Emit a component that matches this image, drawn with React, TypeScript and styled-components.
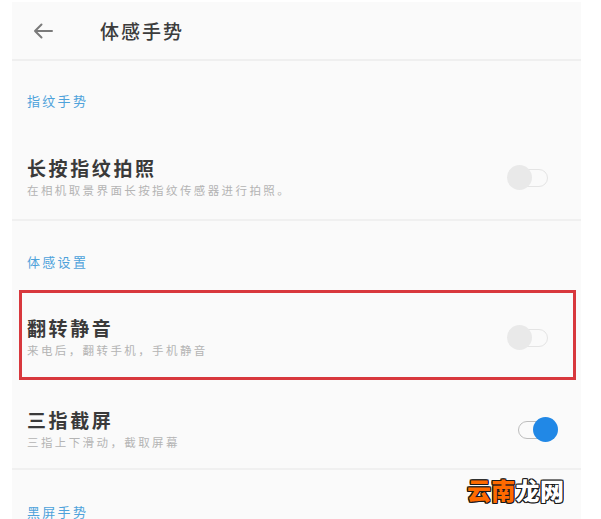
import React from "react";
import styled, { createGlobalStyle } from "styled-components";

const Global = createGlobalStyle`
  html, body { margin: 0; padding: 0; background: #ffffff; }
  body { font-family: "Noto Sans CJK SC", "Noto Sans", sans-serif; }
`;

const Page = styled.div`
  width: 601px;
  height: 519px;
  background: #ffffff;
  overflow: hidden;
`;

const Phone = styled.div`
  position: relative;
  margin: 2px 0 0 12px;
  width: 569px;
  height: 517px;
  background: #fafafa;
  overflow: hidden;
`;

const Header = styled.div`
  height: 57px;
  display: flex;
  align-items: center;
  padding-left: 21px;
  border-bottom: 2px solid #efefef;
  box-sizing: content-box;
`;

const BackBtn = styled.div`
  width: 20px;
  height: 16px;
  display: flex;
  margin-top: 1px;
`;

const Title = styled.div`
  margin-left: 47px;
  font-size: 19px;
  letter-spacing: 2px;
  color: #3c3c3c;
  font-weight: 500;
  line-height: 24px;
`;

const SectionLabel = styled.div<{ $top: number; $bottom: number }>`
  padding: ${(p) => p.$top}px 0 ${(p) => p.$bottom}px 15px;
  font-size: 13px;
  letter-spacing: 2.3px;
  line-height: 20px;
  color: #4ea2da;
`;

const Row = styled.div<{ $top: number; $bottom: number; $divider?: boolean }>`
  display: flex;
  align-items: center;
  padding: ${(p) => p.$top}px 23px ${(p) => p.$bottom}px 15px;
  border-bottom: ${(p) => (p.$divider ? "2px solid #f0f0f0" : "none")};
`;

const Highlight = styled.div`
  margin: 0 5px 0 7px;
  border: 3px solid #d8383d;
  display: flex;
  align-items: center;
  padding: 23px 15px 17px 5px;
`;

const TextCol = styled.div`
  flex: 1;
  display: flex;
  flex-direction: column;
`;

const ItemTitle = styled.div`
  font-size: 19px;
  font-weight: 700;
  letter-spacing: 2.6px;
  line-height: 24px;
  color: #3a3a3a;
`;

const ItemSub = styled.div`
  font-size: 11.5px;
  letter-spacing: 2.4px;
  line-height: 20px;
  color: #b4b4b4;
`;

const SwitchBox = styled.div`
  position: relative;
  width: 51px;
  height: 26px;
  flex: none;
`;

const Track = styled.div<{ $on: boolean }>`
  position: absolute;
  top: 4px;
  left: ${(p) => (p.$on ? 11 : 6)}px;
  width: 35px;
  height: 18px;
  box-sizing: border-box;
  border-radius: 9px;
  border: 1.6px solid ${(p) => (p.$on ? "#bdbdbd" : "#e4e4e4")};
  background: #fafafa;
`;

const Knob = styled.div<{ $on: boolean }>`
  position: absolute;
  top: 0;
  left: ${(p) => (p.$on ? 26 : 0)}px;
  width: 25px;
  height: 25px;
  border-radius: 50%;
  background: ${(p) => (p.$on ? "#2188e6" : "#e9e9e9")};
`;

const Watermark = styled.div`
  position: absolute;
  left: 455px;
  top: 474px;
  font-size: 24px;
  font-weight: 900;
  letter-spacing: 0.3px;
  line-height: 28px;
  color: #ffffff;
  text-shadow: -1px -1px 0 #1a1a1a, 1px -1px 0 #1a1a1a, -1px 1px 0 #1a1a1a,
    1px 1px 0 #1a1a1a, 0 1px 0 #1a1a1a, 0 -1px 0 #1a1a1a, 1px 0 0 #1a1a1a,
    -1px 0 0 #1a1a1a;
`;

const Orange = styled.span`
  color: #ff6a00;
`;

const Switch = ({ on }: { on: boolean }) => (
  <SwitchBox>
    <Track $on={on} />
    <Knob $on={on} />
  </SwitchBox>
);

export default function App() {
  return (
    <Page>
      <Global />
      <Phone>
        <Header>
          <BackBtn>
            <svg width="20" height="16" viewBox="0 0 20 16" fill="none">
              <path
                d="M19 8H2M8.5 1.5L2 8l6.5 6.5"
                stroke="#7a7a7a"
                strokeWidth="2"
                strokeLinecap="round"
                strokeLinejoin="round"
              />
            </svg>
          </BackBtn>
          <Title>体感手势</Title>
        </Header>

        <SectionLabel $top={30} $bottom={12}>指纹手势</SectionLabel>
        <Row $top={33} $bottom={19} $divider>
          <TextCol>
            <ItemTitle>长按指纹拍照</ItemTitle>
            <ItemSub>在相机取景界面长按指纹传感器进行拍照。</ItemSub>
          </TextCol>
          <Switch on={false} />
        </Row>

        <SectionLabel $top={31} $bottom={18}>体感设置</SectionLabel>
        <Highlight>
          <TextCol>
            <ItemTitle>翻转静音</ItemTitle>
            <ItemSub>来电后，翻转手机，手机静音</ItemSub>
          </TextCol>
          <Switch on={false} />
        </Highlight>
        <Row $top={28} $bottom={16} $divider>
          <TextCol>
            <ItemTitle>三指截屏</ItemTitle>
            <ItemSub>三指上下滑动，截取屏幕</ItemSub>
          </TextCol>
          <Switch on={true} />
        </Row>

        <SectionLabel $top={32} $bottom={0}>黑屏手势</SectionLabel>

        <Watermark>
          <Orange>云南</Orange>龙网
        </Watermark>
      </Phone>
    </Page>
  );
}
